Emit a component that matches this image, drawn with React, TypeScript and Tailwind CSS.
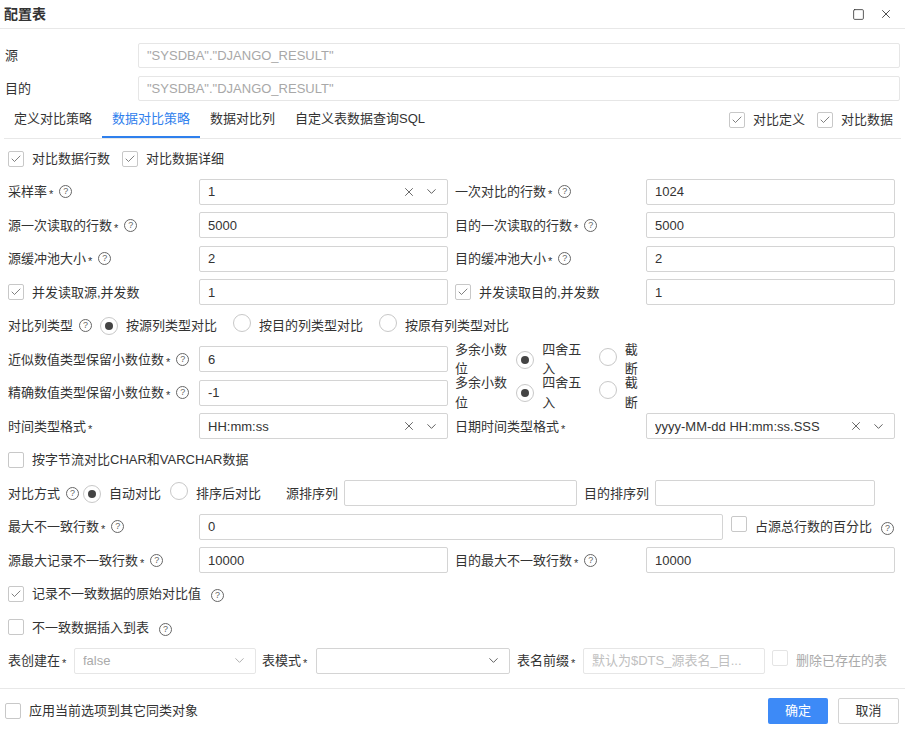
import { X, ChevronDown, Square, Check } from "lucide-react";

const Q = () => (
  <span className="inline-flex items-center justify-center w-[13px] h-[13px] rounded-full border border-[#666] text-[9px] leading-none text-[#666] ml-1.5">?</span>
);

const Box = ({ on, dim }: { on?: boolean; dim?: boolean }) => (
  <span className={`inline-flex items-center justify-center w-[16px] h-[16px] rounded-[2px] border ${dim ? "border-[#e4e4e4]" : "border-[#c8c8c8]"} bg-white shrink-0`}>
    {on && <Check className="w-3 h-3 text-[#555]" strokeWidth={1.5} />}
  </span>
);

const Radio = ({ on }: { on?: boolean }) => (
  <span className="inline-flex items-center justify-center w-[18px] h-[18px] rounded-full border border-[#c8c8c8] bg-white shrink-0">
    {on && <span className="w-[8px] h-[8px] rounded-full bg-[#444]" />}
  </span>
);

const Label = ({ t, req, q, w }: { t: string; req?: boolean; q?: boolean; w: string }) => (
  <div className={`flex items-center shrink-0 ${w}`}>
    <span>{t}</span>
    {req && <span className="text-[11px] self-start mt-[5px] ml-0.5">*</span>}
    {q && <Q />}
  </div>
);

const Input = ({ v, w, sel, clear, ph, dis }: { v?: string; w: string; sel?: boolean; clear?: boolean; ph?: string; dis?: boolean }) => (
  <div className={`flex items-center h-[26px] border ${dis ? "border-[#e6e6e6]" : "border-[#d4d4d4]"} rounded-[2px] px-2 shrink-0 ${w}`}>
    <span className={`flex-1 truncate ${dis ? "text-[#aaa]" : ""}`}>{v}{ph && <span className="text-[#c0c0c0]">{ph}</span>}</span>
    {clear && <X className="w-[14px] h-[14px] text-[#555] mr-2" strokeWidth={1.5} />}
    {sel && <ChevronDown className={`w-[15px] h-[15px] ${dis ? "text-[#aaa]" : "text-[#555]"}`} strokeWidth={1.5} />}
  </div>
);

const Row = ({ children }: { children: React.ReactNode }) => (
  <div className="flex items-center h-[33.5px] pl-2">{children}</div>
);

export default function App() {
  return (
    <div className="w-[905px] h-[732px] bg-white text-[13px] text-[#333] relative overflow-hidden" style={{ fontFamily: "'Liberation Sans', 'Noto Sans CJK SC', sans-serif" }}>
      <div className="flex items-center justify-between h-[29px] border-b border-[#e8e8e8] pl-[4px] pr-[12px]">
        <span className="text-[14px] font-bold">配置表</span>
        <div className="flex items-center gap-[14px]">
          <Square className="w-[13px] h-[13px] text-[#333]" strokeWidth={1.5} />
          <X className="w-[14px] h-[14px] text-[#333]" strokeWidth={1.5} />
        </div>
      </div>
      <div className="pt-[14px]">
        <div className="flex items-center h-[25px] pl-[5px] mb-[8px]">
          <span className="w-[133px]">源</span>
          <div className="flex-1 mr-[5px] h-[25px] border border-[#e6e6e6] rounded-[2px] px-2 flex items-center text-[#a8a8a8]">"SYSDBA"."DJANGO_RESULT"</div>
        </div>
        <div className="flex items-center h-[25px] pl-[5px]">
          <span className="w-[133px]">目的</span>
          <div className="flex-1 mr-[5px] h-[25px] border border-[#e6e6e6] rounded-[2px] px-2 flex items-center text-[#a8a8a8]">"SYSDBA"."DJANGO_RESULT"</div>
        </div>
      </div>
      <div className="flex items-end justify-between h-[38px] mx-[4px] border-b border-[#e8e8e8]">
        <div className="flex h-full items-stretch">
          {["定义对比策略", "数据对比策略", "数据对比列", "自定义表数据查询SQL"].map((t, i) => (
            <div key={t} className={`flex items-center px-[10px] ${i === 1 ? "text-[#2f80ed] border-b-2 border-[#2f80ed]" : "border-b-2 border-transparent"}`}>{t}</div>
          ))}
        </div>
        <div className="flex items-center h-full gap-2 pr-[8px]">
          <Box on /><span className="mr-1">对比定义</span>
          <Box on /><span>对比数据</span>
        </div>
      </div>
      <div className="pt-[3px]">
        <div className="flex items-center h-[33px] pl-2 gap-2">
          <Box on /><span className="mr-1">对比数据行数</span>
          <Box on /><span>对比数据详细</span>
        </div>
        <Row>
          <Label t="采样率" req q w="w-[191px]" />
          <Input v="1" sel clear w="w-[249px]" />
          <Label t="一次对比的行数" req q w="w-[191px] pl-[7px] box-content" />
          <Input v="1024" w="w-[249px]" />
        </Row>
        <Row>
          <Label t="源一次读取的行数" req q w="w-[191px]" />
          <Input v="5000" w="w-[249px]" />
          <Label t="目的一次读取的行数" req q w="w-[191px] pl-[7px] box-content" />
          <Input v="5000" w="w-[249px]" />
        </Row>
        <Row>
          <Label t="源缓冲池大小" req q w="w-[191px]" />
          <Input v="2" w="w-[249px]" />
          <Label t="目的缓冲池大小" req q w="w-[191px] pl-[7px] box-content" />
          <Input v="2" w="w-[249px]" />
        </Row>
        <Row>
          <div className="w-[191px] flex items-center gap-2"><Box on /><span>并发读取源,并发数</span></div>
          <Input v="1" w="w-[249px]" />
          <div className="w-[191px] pl-[7px] box-content flex items-center gap-2"><Box on /><span>并发读取目的,并发数</span></div>
          <Input v="1" w="w-[249px]" />
        </Row>
        <Row>
          <Label t="对比列类型" q w="" />
          <span className="ml-[8px]"><Radio on /></span><span className="ml-2">按源列类型对比</span>
          <span className="ml-[16px]"><Radio /></span><span className="ml-2">按目的列类型对比</span>
          <span className="ml-[16px]"><Radio /></span><span className="ml-2">按原有列类型对比</span>
        </Row>
        <Row>
          <Label t="近似数值类型保留小数位数" req q w="w-[191px]" />
          <Input v="6" w="w-[249px]" />
          <div className="w-[191px] pl-[7px] box-content flex items-center">
            <span>多余小数位</span><span className="ml-2"><Radio on /></span><span className="ml-2">四舍五入</span>
            <span className="ml-[14px]"><Radio /></span><span className="ml-2">截断</span>
          </div>
        </Row>
        <Row>
          <Label t="精确数值类型保留小数位数" req q w="w-[191px]" />
          <Input v="-1" w="w-[249px]" />
          <div className="w-[191px] pl-[7px] box-content flex items-center">
            <span>多余小数位</span><span className="ml-2"><Radio on /></span><span className="ml-2">四舍五入</span>
            <span className="ml-[14px]"><Radio /></span><span className="ml-2">截断</span>
          </div>
        </Row>
        <Row>
          <Label t="时间类型格式" req w="w-[191px]" />
          <Input v="HH:mm:ss" sel clear w="w-[249px]" />
          <Label t="日期时间类型格式" req w="w-[191px] pl-[7px] box-content" />
          <Input v="yyyy-MM-dd HH:mm:ss.SSS" sel clear w="w-[249px]" />
        </Row>
        <Row>
          <Box /><span className="ml-2">按字节流对比CHAR和VARCHAR数据</span>
        </Row>
        <Row>
          <Label t="对比方式" q w="" />
          <span className="ml-[4px]"><Radio on /></span><span className="ml-2">自动对比</span>
          <span className="ml-[9px]"><Radio /></span><span className="ml-2">排序后对比</span>
          <span className="ml-[25px] mr-[6px]">源排序列</span>
          <Input w="w-[233px]" />
          <span className="ml-[7px] mr-[6px]">目的排序列</span>
          <Input w="w-[220px]" />
        </Row>
        <Row>
          <Label t="最大不一致行数" req q w="w-[191px]" />
          <Input v="0" w="w-[524px]" />
          <span className="ml-[8px]"><Box /></span><span className="ml-2">占源总行数的百分比</span><span className="ml-[3px]"><Q /></span>
        </Row>
        <Row>
          <Label t="源最大记录不一致行数" req q w="w-[191px]" />
          <Input v="10000" w="w-[249px]" />
          <Label t="目的最大不一致行数" req q w="w-[191px] pl-[7px] box-content" />
          <Input v="10000" w="w-[249px]" />
        </Row>
        <Row>
          <Box on /><span className="ml-2">记录不一致数据的原始对比值</span><span className="ml-1"><Q /></span>
        </Row>
        <Row>
          <Box /><span className="ml-2">不一致数据插入到表</span><span className="ml-1"><Q /></span>
        </Row>
        <Row>
          <Label t="表创建在" req w="w-[66px]" />
          <Input v="false" sel dis w="w-[182px]" />
          <Label t="表模式" req w="w-[54px] pl-[6px] box-content" />
          <Input sel w="w-[194px]" />
          <Label t="表名前缀" req w="w-[66px] pl-[7px] box-content" />
          <Input ph="默认为$DTS_源表名_目..." dis w="w-[182px]" />
          <span className="ml-[7px]"><Box dim /></span><span className="ml-2 text-[#aaa]">删除已存在的表</span>
        </Row>
      </div>
      <div className="absolute left-0 right-0 top-[688px] border-t border-[#e8e8e8] h-[44px] flex items-center justify-between pl-[5px] pr-[6px]">
        <div className="flex items-center gap-2"><Box /><span>应用当前选项到其它同类对象</span></div>
        <div className="flex gap-[10px]">
          <button className="w-[60px] h-[26px] bg-[#3d8af7] text-white rounded-[2px]">确定</button>
          <button className="w-[61px] h-[26px] border border-[#d4d4d4] rounded-[2px]">取消</button>
        </div>
      </div>
    </div>
  );
}
